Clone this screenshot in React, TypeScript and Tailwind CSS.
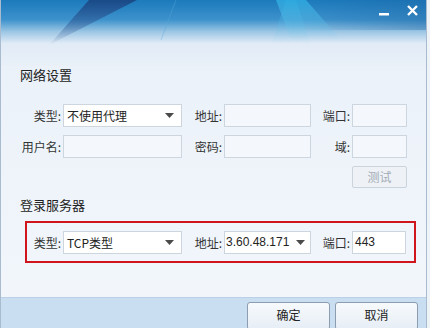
import React from "react";

const font = { fontFamily: '"Noto Sans CJK SC", "Microsoft YaHei", sans-serif' };

function Arrow() {
  return (
    <svg width="9" height="5" viewBox="0 0 9 5" className="shrink-0">
      <path d="M0 0 H9 L4.5 5 Z" fill="#4a4a4a" />
    </svg>
  );
}

function Label({ w, children }: { w: string; children: React.ReactNode }) {
  return (
    <div className={`${w} shrink-0 text-right pr-[2px] text-[12px] leading-[23px] text-[#333]`}>{children}</div>
  );
}

function Input({ w, value, white }: { w: string; value?: string; white?: boolean }) {
  return (
    <div
      className={`${w} h-[23px] shrink-0 border border-[#cdd5df] ${white ? "bg-white" : "bg-[#f4f7fb]"} px-[2px] text-[12px] leading-[21px] text-[#222] font-['Liberation_Sans',sans-serif] overflow-hidden`}
    >
      {value}
    </div>
  );
}

function Select({ w, value, sans }: { w: string; value: string; sans?: boolean }) {
  return (
    <div className={`${w} h-[23px] shrink-0 border border-[#cdd5df] bg-white flex items-center ${sans ? "pl-[1px] pr-[5px]" : "pl-[3px] pr-[7px]"}`}>
      <span className={`flex-1 min-w-0 text-[12px] leading-[21px] text-[#222] whitespace-nowrap overflow-hidden ${sans ? "font-['Liberation_Sans',sans-serif]" : ""}`}>{value}</span>
      <Arrow />
    </div>
  );
}

export default function App() {
  return (
    <div className="w-[430px] h-[328px] overflow-hidden bg-[#eef3f8]" style={font}>
      <div className="w-[427px] h-[328px] flex flex-col bg-gradient-to-b from-[#e9f0f8] to-[#f3f7fc] border-l border-r border-[#a9bccf]">
        <div className="relative h-[66px] shrink-0">
          <svg className="absolute inset-0" width="425" height="66" viewBox="0 0 425 66">
            <defs>
              <linearGradient id="bg" x1="0" y1="0" x2="0" y2="1">
                <stop offset="0" stopColor="#1c7abc" />
                <stop offset="0.3" stopColor="#3d92cc" />
                <stop offset="0.48" stopColor="#9cc6e4" />
                <stop offset="0.66" stopColor="#e1ebf6" />
                <stop offset="1" stopColor="#e9f0f8" />
              </linearGradient>
              <linearGradient id="streak" x1="0" y1="0" x2="0" y2="1">
                <stop offset="0" stopColor="#1a4a88" stopOpacity="1" />
                <stop offset="1" stopColor="#3e5f98" stopOpacity="0" />
              </linearGradient>
              <linearGradient id="ray" x1="0" y1="0" x2="0" y2="1">
                <stop offset="0" stopColor="#2eaee2" stopOpacity="0.8" />
                <stop offset="1" stopColor="#7fcdef" stopOpacity="0" />
              </linearGradient>
              <linearGradient id="edge" x1="0" y1="0" x2="1" y2="0">
                <stop offset="0" stopColor="#1a5f9e" stopOpacity="0" />
                <stop offset="1" stopColor="#1a5f9e" stopOpacity="0.35" />
              </linearGradient>
            </defs>
            <rect width="425" height="66" fill="url(#bg)" />
            <rect x="300" width="125" height="30" fill="url(#edge)" />
            <path d="M48 45 L88 0 L136 0 Z" fill="url(#streak)" />
            <path d="M275 0 L305 0 L340 40 L290 40 Z" fill="url(#ray)" />
            <path d="M285 0 L295 0 L310 45 L270 45 Z" fill="url(#ray)" opacity="0.6" />
            <line x1="160" y1="40" x2="175" y2="0" stroke="#5aa8d8" strokeWidth="1" opacity="0.4" />
            <rect x="378" y="13" width="10" height="2.5" fill="#ffffff" />
            <path d="M407 6 L416 15 M416 6 L407 15" stroke="#ffffff" strokeWidth="2.4" />
          </svg>
        </div>

        <div className="pl-[19px] h-[18px] text-[13px] leading-[18px] text-[#222]">网络设置</div>

        <div className="mt-[20px] pl-[19px] flex">
          <Label w="w-[43px]">类型:</Label>
          <Select w="w-[119px]" value="不使用代理" />
          <Label w="w-[42px]">地址:</Label>
          <Input w="w-[87px]" />
          <Label w="w-[41px]">端口:</Label>
          <Input w="w-[55px]" />
        </div>
        <div className="mt-[8px] pl-[19px] flex">
          <Label w="w-[43px]">用户名:</Label>
          <Input w="w-[119px]" />
          <Label w="w-[42px]">密码:</Label>
          <Input w="w-[87px]" />
          <Label w="w-[41px]">域:</Label>
          <Input w="w-[55px]" />
        </div>
        <div className="mt-[8px] pl-[351px] flex">
          <div className="w-[55px] h-[22px] border border-[#cbd3dd] rounded-[2px] bg-[#eef2f7] text-center text-[12px] leading-[20px] text-[#a3abb5]">
            测试
          </div>
        </div>

        <div className="mt-[8px] pl-[19px] h-[18px] text-[13px] leading-[18px] text-[#222]">登录服务器</div>

        <div className="mt-[7px] ml-[24px] w-[391px] h-[42px] border-2 border-[#d0161c] flex items-center">
          <Label w="w-[36px]">类型:</Label>
          <Select w="w-[119px]" value="TCP类型" />
          <Label w="w-[42px]">地址:</Label>
          <Select w="w-[87px]" value="3.60.48.171" sans />
          <Label w="w-[41px]">端口:</Label>
          <Input w="w-[54px]" value="443" white />
        </div>

        <div className="flex-1" />

        <div className="h-[31px] shrink-0 bg-[#c9def0] border-t border-[#b9d0e6] flex justify-end items-start pt-[4px] pr-[8px] gap-[5px]">
          <div className="w-[83px] h-[28px] border border-[#8d9db0] rounded-[3px] bg-gradient-to-b from-[#f7fafd] to-[#e6edf5] text-center text-[12px] leading-[24px] text-[#222]">
            确定
          </div>
          <div className="w-[83px] h-[28px] border border-[#8d9db0] rounded-[3px] bg-gradient-to-b from-[#f7fafd] to-[#e6edf5] text-center text-[12px] leading-[24px] text-[#222]">
            取消
          </div>
        </div>
      </div>
    </div>
  );
}
